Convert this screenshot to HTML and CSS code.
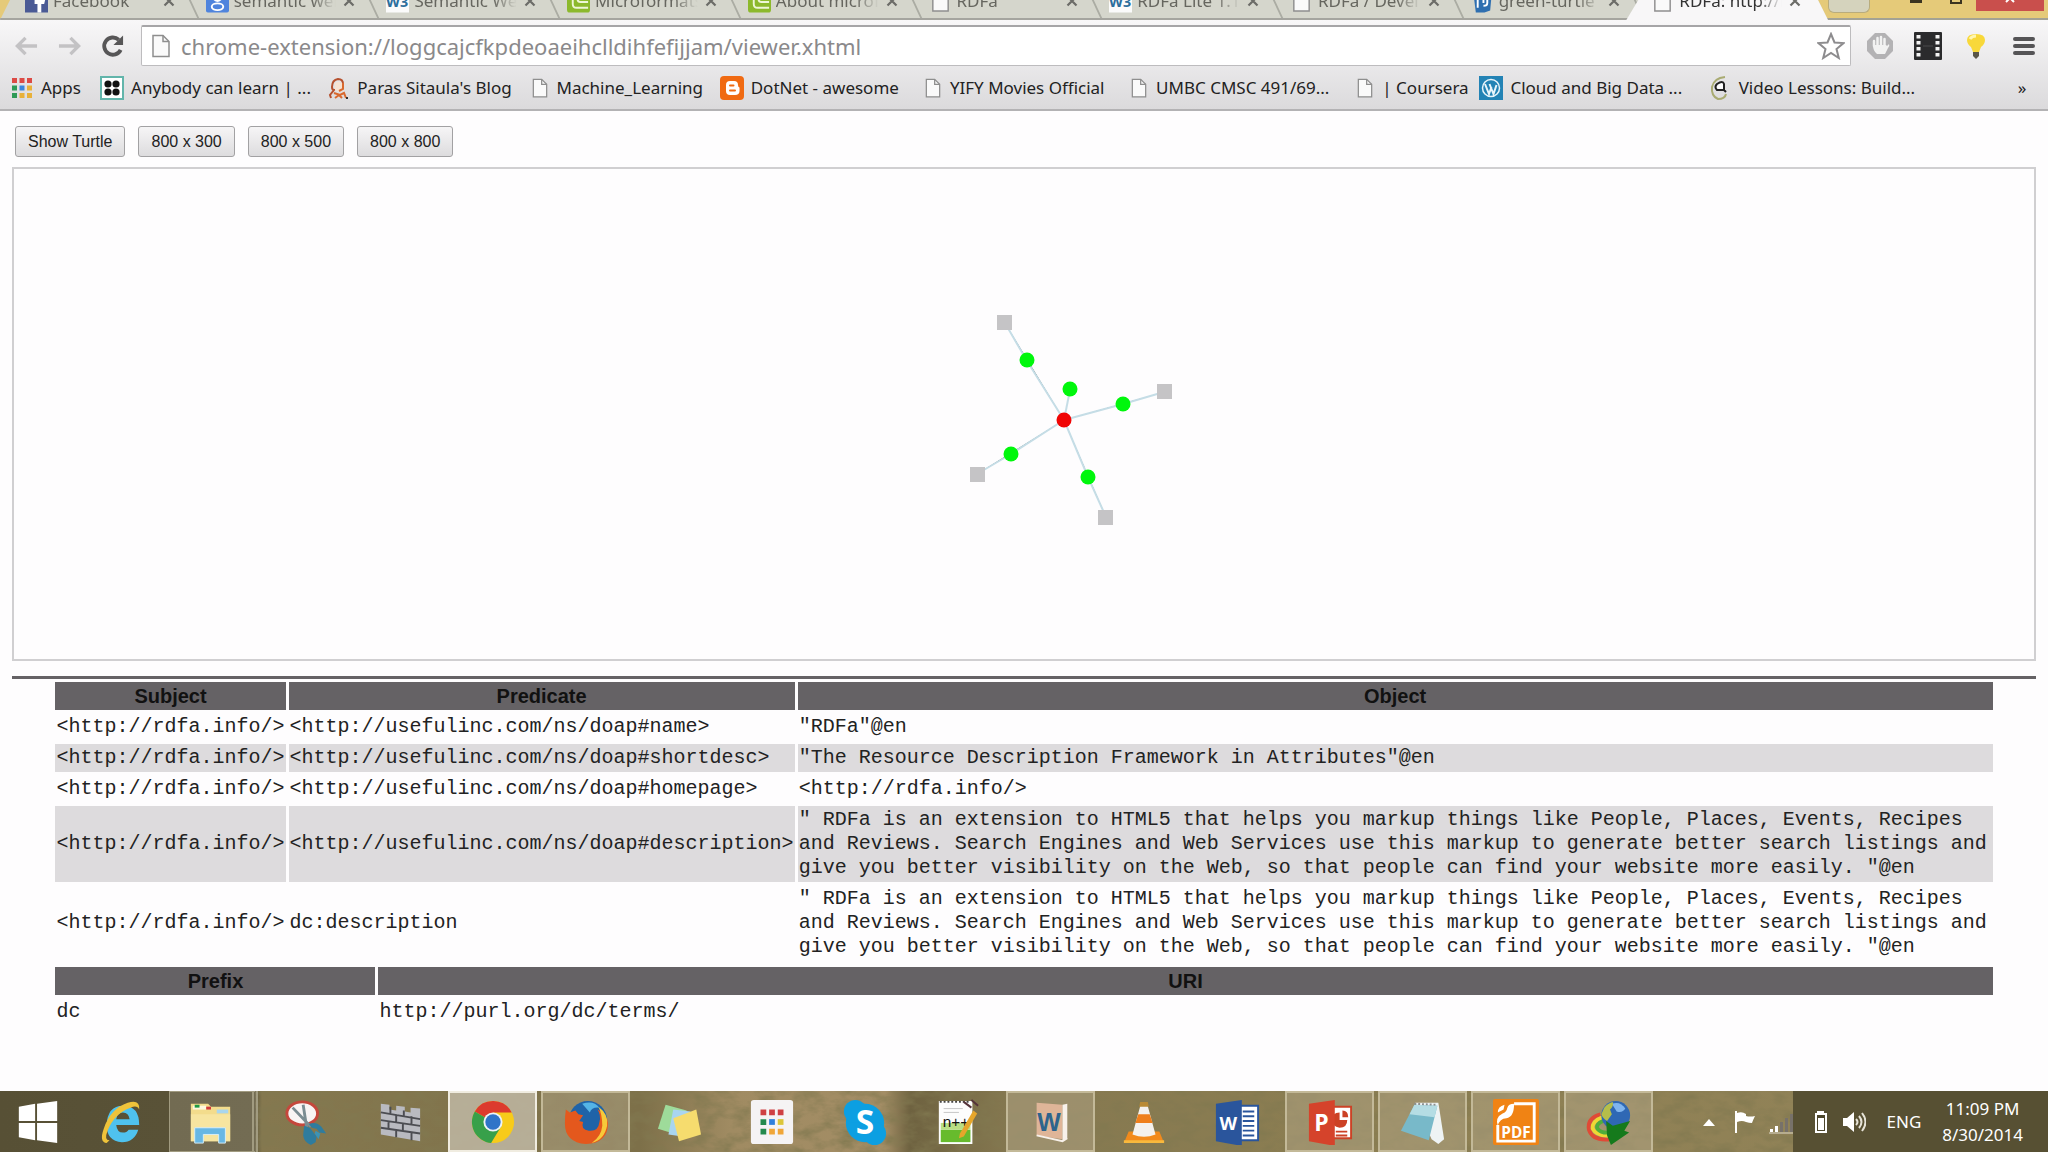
FILE: index.html
```html
<!DOCTYPE html>
<html lang="en">
  <head>
    <meta charset="UTF-8" />
    <meta name="viewport" content="width=device-width, initial-scale=1.0" />
    <title>RDFa: http://rdfa.info/</title>
    <link rel="stylesheet" href="styles.css">
  </head>
  <body>
    <!-- shared icons -->
    <svg class="defs" xmlns="http://www.w3.org/2000/svg">
      <symbol id="page" viewBox="0 0 24 24">
        <path d="M4 1.500h10l6 6v15H4z" fill="#fafafa" stroke="#8e8e8e" stroke-width="1.500"></path>
        <path d="M14 1.500v6h6" fill="none" stroke="#8e8e8e" stroke-width="1.500"></path>
      </symbol>
      <symbol id="w3" viewBox="0 0 24 24">
        <rect width="24" height="24" fill="#fbfbfb"></rect>
        <text x="0" y="18" font-family="Open Sans, sans-serif" font-weight="700" font-size="15" fill="#2c6e9c">W3</text>
      </symbol>
      <symbol id="leaf" viewBox="0 0 24 24">
        <rect width="24" height="24" rx="3" fill="#8cb92c"></rect>
        <path d="M6 0v15q0 4 4 4h12M11 0v10q0 3 3 3h8" fill="none" stroke="#eef6d6" stroke-width="2"></path>
      </symbol>
      <symbol id="close" viewBox="0 0 12 12">
        <path d="M1.500 1.500l9 9M10.500 1.500l-9 9" stroke="#6c6c68" stroke-width="2.200"></path>
      </symbol>
      <filter id="grass" x="0" y="0" width="100%" height="100%">
        <feTurbulence type="fractalNoise" baseFrequency="0.05 0.09" numOctaves="4" seed="7"></feTurbulence>
        <feColorMatrix values="0 0 0 0 0.22  0 0 0 0 0.19  0 0 0 0 0.08  1.800 0 0 0 -0.700"></feColorMatrix>
      </filter>
    </svg>

    <header class="browser">
      <div class="strip">
        <nav class="tabs">
          <a class="tab" href="#">
            <svg class="tab_icon" viewBox="0 0 24 24"><rect width="24" height="24" fill="#4a5a95"></rect><path d="M13 24v-9h-3v-4h3V8q0-5 5-5h3v4h-2q-2 0-2 2v2h4l-1 4h-3v9z" fill="#fff"></path></svg>
            <span class="tab_title">Facebook</span><svg class="tab_close"><use href="#close"></use></svg>
          </a>
          <a class="tab" href="#">
            <svg class="tab_icon" viewBox="0 0 24 24"><rect width="24" height="24" rx="2" fill="#4f84dd"></rect><circle cx="12" cy="8" r="4" fill="none" stroke="#fff" stroke-width="2"></circle><ellipse cx="12" cy="18" rx="6" ry="3.500" fill="none" stroke="#fff" stroke-width="2"></ellipse></svg>
            <span class="tab_title">semantic web</span><svg class="tab_close"><use href="#close"></use></svg>
          </a>
          <a class="tab" href="#">
            <svg class="tab_icon"><use href="#w3"></use></svg>
            <span class="tab_title">Semantic Web</span><svg class="tab_close"><use href="#close"></use></svg>
          </a>
          <a class="tab" href="#">
            <svg class="tab_icon"><use href="#leaf"></use></svg>
            <span class="tab_title">Microformats</span><svg class="tab_close"><use href="#close"></use></svg>
          </a>
          <a class="tab" href="#">
            <svg class="tab_icon"><use href="#leaf"></use></svg>
            <span class="tab_title">About microf</span><svg class="tab_close"><use href="#close"></use></svg>
          </a>
          <a class="tab" href="#">
            <svg class="tab_icon"><use href="#page"></use></svg>
            <span class="tab_title">RDFa</span><svg class="tab_close"><use href="#close"></use></svg>
          </a>
          <a class="tab" href="#">
            <svg class="tab_icon"><use href="#w3"></use></svg>
            <span class="tab_title">RDFa Lite 1.1</span><svg class="tab_close"><use href="#close"></use></svg>
          </a>
          <a class="tab" href="#">
            <svg class="tab_icon"><use href="#page"></use></svg>
            <span class="tab_title">RDFa / Devel</span><svg class="tab_close"><use href="#close"></use></svg>
          </a>
          <a class="tab" href="#">
            <svg class="tab_icon" viewBox="0 0 24 24"><path d="M2 0h20l-2 22-6 2H5z" fill="#2f6fb0"></path><path d="M7 6v13M7 8h4q2 0 2 3v3M17 6v8q0 3-4 3" fill="none" stroke="#fff" stroke-width="2"></path></svg>
            <span class="tab_title">green-turtle</span><svg class="tab_close"><use href="#close"></use></svg>
          </a>
          <a class="tab tab_active" href="#">
            <svg class="tab_icon"><use href="#page"></use></svg>
            <span class="tab_title">RDFa: http://r</span><svg class="tab_close"><use href="#close"></use></svg>
          </a>
        </nav>
        <button class="new_tab" aria-label="New tab"></button>
        <div class="window_buttons">
          <button class="win_btn" aria-label="Minimize"><svg width="14" height="4"><rect width="12" height="3" x="1" fill="#3b3420"></rect></svg></button>
          <button class="win_btn" aria-label="Maximize"><svg width="14" height="4"><path d="M2 0v3h10V0" fill="none" stroke="#3b3420" stroke-width="2"></path></svg></button>
          <button class="win_btn win_close" aria-label="Close"><svg width="14" height="4"><path d="M3 2l3-3M11 2l-3-3" stroke="#fff" stroke-width="2"></path></svg></button>
        </div>
      </div>

      <div class="toolbar">
        <button class="tool" aria-label="Back"><svg viewBox="0 0 24 24"><path d="M23 12H4M11 3.500L2.500 12l8.500 8.500" fill="none" stroke="#c3c2c4" stroke-width="3.500"></path></svg></button>
        <button class="tool" aria-label="Forward"><svg viewBox="0 0 24 24"><path d="M1 12h19M13 3.500l8.500 8.500-8.500 8.500" fill="none" stroke="#c3c2c4" stroke-width="3.500"></path></svg></button>
        <button class="tool" aria-label="Reload"><svg viewBox="0 0 24 24"><path d="M18.500 5.500A9 9 0 1 0 20.500 16" fill="none" stroke="#575657" stroke-width="4"></path><path d="M23 1v10H13z" fill="#575657"></path></svg></button>
        <div class="omnibox">
          <svg class="omni_icon"><use href="#page"></use></svg>
          <input class="url" type="text" aria-label="Address" value="chrome-extension://loggcajcfkpdeoaeihclldihfefijjam/viewer.xhtml">
          <button class="star" aria-label="Bookmark this page"><svg viewBox="0 0 28 28"><path d="M14 2l3.500 8.500 9 .6-7 5.900 2.300 9L14 21l-7.800 5 2.300-9-7-5.900 9-.6z" fill="#fff" stroke="#8d8c8e" stroke-width="2"></path></svg></button>
        </div>
        <div class="extensions">
          <button class="ext" aria-label="Ad blocker"><svg viewBox="0 0 28 28"><path d="M9 1h10l8 8v10l-8 8H9l-8-8V9z" fill="#b3b2b4"></path><path d="M8 14V9M11.500 13V6M15 13V5M18.500 14V7" stroke="#f2f2f2" stroke-width="2.500" stroke-linecap="round"></path><path d="M7 13h13l1 1 2-2q1 2-1 4l-3 6h-8q-4-3-4-9z" fill="#f2f2f2"></path></svg></button>
          <button class="ext" aria-label="Film"><svg viewBox="0 0 28 28"><rect width="28" height="28" rx="1" fill="#2b2b2d"></rect><path d="M4.500 3v23M23.500 3v23" stroke="#f4f4f4" stroke-width="4" stroke-dasharray="3.500 2.500"></path><path d="M9 14h10" stroke="#4a4a4c"></path></svg></button>
          <button class="ext" aria-label="Light bulb"><svg viewBox="0 0 28 28"><path d="M5 8q0-6 9-6t9 6q0 4-4 7l-2 5h-6l-2-5Q5 12 5 8z" fill="#f8d83a"></path><path d="M8 7q2-3 6-3" stroke="#fff6b0" stroke-width="3" fill="none"></path><path d="M11 20h6v4l-3 3-3-3z" fill="#5a5648"></path></svg></button>
          <button class="ext" aria-label="Menu"><svg viewBox="0 0 28 28"><path d="M5 7h18M5 14h18M5 21h18" stroke="#555456" stroke-width="4" stroke-linecap="round"></path></svg></button>
        </div>
      </div>

      <nav class="bookmarks">
        <a href="#"><svg class="bm_icon" viewBox="0 0 24 24"><path d="M2 2h5v5H2zM9.500 2h5v5h-5zM17 2h5v5h-5z" fill="#dc4b45"></path><path d="M2 9.500h5v5H2zM2 17h5v5H2z" fill="#2e9a57"></path><path d="M9.500 9.500h5v5h-5z" fill="#3a86dd"></path><path d="M17 9.500h5v5h-5zM9.500 17h5v5h-5zM17 17h5v5h-5z" fill="#e8b13a"></path></svg>Apps</a>
        <a href="#"><svg class="bm_icon" viewBox="0 0 24 24"><rect x="1" y="1" width="22" height="22" fill="#fff" stroke="#62b5ab" stroke-width="2"></rect><g fill="#111"><circle cx="8" cy="8" r="3.600"></circle><circle cx="16" cy="8" r="3.600"></circle><circle cx="8" cy="16" r="3.600"></circle><circle cx="16" cy="16" r="3.600"></circle></g></svg>Anybody can learn | ...</a>
        <a href="#"><svg class="bm_icon" viewBox="0 0 24 24"><path d="M17 8q0-5-5-5Q6 4 6 11q0 3 2 3l-4 5 1 3" fill="none" stroke="#b5502e" stroke-width="2"></path><path d="M9 7q6-3 8 2l1 5-4 2-5-2z" fill="#f7e2d2"></path><path d="M17 7v6l-4 2M8 17l6 2 4-2 2 5M9 22l4-3 3 3" fill="none" stroke="#d9692f" stroke-width="2"></path><path d="M20 22h2" stroke="#333" stroke-width="2"></path></svg>Paras Sitaula's Blog</a>
        <a href="#"><svg class="bm_icon bm_page"><use href="#page"></use></svg>Machine_Learning</a>
        <a href="#"><svg class="bm_icon" viewBox="0 0 24 24"><rect width="24" height="24" rx="4" fill="#f06a12"></rect><path d="M6 9q0-4 4-4h4q4 0 4 4 0 2 1.500 2.500V15q0 4-4.500 4h-5q-4 0-4-4z" fill="#fff"></path><path d="M10 9.500h3.500M10 14.500h5" stroke="#f06a12" stroke-width="2" stroke-linecap="round"></path></svg>DotNet - awesome</a>
        <a href="#"><svg class="bm_icon bm_page"><use href="#page"></use></svg>YIFY Movies Official</a>
        <a href="#"><svg class="bm_icon bm_page"><use href="#page"></use></svg>UMBC CMSC 491/69...</a>
        <a href="#"><svg class="bm_icon bm_page"><use href="#page"></use></svg>| Coursera</a>
        <a href="#"><svg class="bm_icon" viewBox="0 0 24 24"><rect width="24" height="24" fill="#2383b5"></rect><circle cx="12" cy="12" r="8.500" fill="none" stroke="#e8f4fa" stroke-width="1.500"></circle><path d="M6 8l4 10 2.500-7M10.500 8l4 10 3-9" fill="none" stroke="#e8f4fa" stroke-width="2"></path></svg>Cloud and Big Data ...</a>
        <a href="#"><svg class="bm_icon" viewBox="0 0 24 24"><path d="M17 1Q6 2 4 11q-1 9 6 12 7 0 8-5" fill="none" stroke="#a9ab72" stroke-width="2"></path><path d="M9 8q6-4 7 0v6H9q-3-3 0-6zM16 14l2 2" fill="#fff" stroke="#222" stroke-width="2"></path></svg>Video Lessons: Build...</a>
        <button class="more" aria-label="More bookmarks">»</button>
      </nav>
    </header>

    <main class="viewer">
      <div class="controls">
        <button class="btn">Show Turtle</button>
        <button class="btn">800 x 300</button>
        <button class="btn">800 x 500</button>
        <button class="btn">800 x 800</button>
      </div>

      <!-- red: subject, green: predicates, grey: literal objects -->
      <svg class="graph" viewBox="0 -1 2020 490">
        <g stroke="#c5dde6" stroke-width="2">
          <path d="M1050 250L1013 191L991 153"></path>
          <path d="M1050 250L1056 220"></path>
          <path d="M1050 250L1109 234L1150 222"></path>
          <path d="M1050 250L997 284L963 304"></path>
          <path d="M1050 250L1074 307L1092 347"></path>
        </g>
        <g fill="#c5c4c6">
          <rect x="983" y="145" width="15" height="15"></rect>
          <rect x="1143" y="214" width="15" height="15"></rect>
          <rect x="956" y="297" width="15" height="15"></rect>
          <rect x="1084" y="340" width="15" height="15"></rect>
        </g>
        <g fill="#00f70c">
          <circle cx="1013" cy="190" r="7.500"></circle>
          <circle cx="1056" cy="219" r="7.500"></circle>
          <circle cx="1109" cy="234" r="7.500"></circle>
          <circle cx="997" cy="284" r="7.500"></circle>
          <circle cx="1074" cy="307" r="7.500"></circle>
        </g>
        <circle cx="1050" cy="250" r="7.500" fill="#f00505"></circle>
      </svg>

      <hr class="rule">

      <table class="triples">
        <thead>
          <tr><th>Subject</th><th>Predicate</th><th>Object</th></tr>
        </thead>
        <tbody>
          <tr>
            <td class="term">&lt;http://rdfa.info/&gt;</td>
            <td class="term">&lt;http://usefulinc.com/ns/doap#name&gt;</td>
            <td>"RDFa"@en</td>
          </tr>
          <tr>
            <td class="term">&lt;http://rdfa.info/&gt;</td>
            <td class="term">&lt;http://usefulinc.com/ns/doap#shortdesc&gt;</td>
            <td>"The Resource Description Framework in Attributes"@en</td>
          </tr>
          <tr>
            <td class="term">&lt;http://rdfa.info/&gt;</td>
            <td class="term">&lt;http://usefulinc.com/ns/doap#homepage&gt;</td>
            <td>&lt;http://rdfa.info/&gt;</td>
          </tr>
          <tr>
            <td class="term">&lt;http://rdfa.info/&gt;</td>
            <td class="term">&lt;http://usefulinc.com/ns/doap#description&gt;</td>
            <td>" RDFa is an extension to HTML5 that helps you markup things like People, Places, Events, Recipes and Reviews. Search Engines and Web Services use this markup to generate better search listings and give you better visibility on the Web, so that people can find your website more easily. "@en</td>
          </tr>
          <tr>
            <td class="term">&lt;http://rdfa.info/&gt;</td>
            <td class="term">dc:description</td>
            <td>" RDFa is an extension to HTML5 that helps you markup things like People, Places, Events, Recipes and Reviews. Search Engines and Web Services use this markup to generate better search listings and give you better visibility on the Web, so that people can find your website more easily. "@en</td>
          </tr>
        </tbody>
      </table>

      <table class="triples">
        <thead>
          <tr><th class="prefix">Prefix</th><th>URI</th></tr>
        </thead>
        <tbody>
          <tr><td>dc</td><td>http://purl.org/dc/terms/</td></tr>
        </tbody>
      </table>
    </main>

    <footer class="taskbar">
      <svg class="texture"><rect width="100%" height="100%" filter="url(#grass)"></rect></svg>
      <button class="start" aria-label="Start"><svg viewBox="0 0 48 48"><path d="M4 8l17-3v18H4zM23 5l21-3v21H23zM4 25h17v18L4 40zM23 25h21v21l-21-3z" fill="#fff"></path></svg></button>
      <div class="apps">
        <button class="app" aria-label="Internet Explorer"><svg viewBox="0 0 48 48"><path d="M43 27H19q1 8 7 8 4 0 6-3h10q-4 13-17 13Q9 44 9 27 10 7 26 7q17 0 17 20zM19 21h14q-1-7-7-7t-7 7z" fill="#4fc2ee"></path><path d="M9 46Q1 45 6 31 13 10 31 4q13-4 12 7-2-5-9-2Q17 15 10 33q-4 10 2 10z" fill="#efc33a"></path></svg></button>
        <button class="app app_open app_stack" aria-label="File Explorer"><svg viewBox="0 0 48 48"><path d="M3 5h18l3 3h20v36H3z" fill="#f3dc8c"></path><path d="M5 7h14v4H5z" fill="#fff8dc"></path><path d="M7 6h5v3H7z" fill="#1f9a45"></path><path d="M19 8h5v3h-5z" fill="#d23b3b"></path><path d="M30 11h12v4H30z" fill="#a9d6ee"></path><path d="M3 16h41v28H3z" fill="#f7e5a0"></path><path d="M7 46V30h32v16h-7v-9H16v9z" fill="#67b7e4" stroke="#d8eef8"></path></svg></button>
        <button class="app" aria-label="Snipping Tool"><svg viewBox="0 0 48 48"><ellipse cx="19" cy="15" rx="16" ry="12" fill="#f8f4f4" stroke="#c5473c" stroke-width="3"></ellipse><path d="M9 9l19 20M20 6l4 26" stroke="#7b8c92" stroke-width="3"></path><path d="M26 26q8-3 13 3l5 7-7-1-3-4-5-1z" fill="#2f7c9e"></path><path d="M21 28l6 2 7 9-1 6-5 3q-7-3-8-10z" fill="#2f7c9e"></path><path d="M33 33l5 3-2 6-4-6z" fill="#3d93b5"></path></svg></button>
        <button class="app" aria-label="Firewall"><svg viewBox="0 0 48 48"><path d="M4 5l9 1v5l7 1V7l9 1v5l6 1V9l10 1v34L4 37z" fill="#b9bac0"></path><path d="M4 14l41 7M4 22l41 6M4 30l41 6M14 8v7M28 12v6M20 16v8M36 18v9M12 23v8M27 25v8M20 32v8M36 35v8" stroke="#4c4d52" stroke-width="2"></path></svg></button>
        <button class="app app_open app_focus" aria-label="Chrome"><svg viewBox="0 0 48 48"><circle cx="24" cy="24" r="22" fill="#f7cb1a"></circle><path d="M24 24L5 13A22 22 0 0 1 43.500 14H24z" fill="#dc3a2e"></path><path d="M24 24L5 13a22 22 0 0 0 17 33l11-18z" fill="#37a04a"></path><circle cx="24" cy="24" r="10" fill="#eef3f8"></circle><circle cx="24" cy="24" r="8" fill="#2f74c8"></circle></svg></button>
        <button class="app app_open" aria-label="Firefox"><svg viewBox="0 0 48 48"><circle cx="26" cy="22" r="20" fill="#1f63a8"></circle><path d="M20 5q12-4 18 4-8-1-10 5z" fill="#54b4e6"></path><path d="M3 11l4 3 6-2 3 4 5 1-4 6 4 1q-3 8 6 9 10 1 11-9 2-7-2-13 10 5 11 14 0 21-23 22Q2 45 2 26q0-9 1-15z" fill="#e4581d"></path><path d="M37 8q11 8 9 20-3 15-16 18 10-7 11-18 0-12-4-20z" fill="#f7c93a"></path></svg></button>
        <button class="app" aria-label="Sticky Notes"><svg viewBox="0 0 48 48"><path d="M10 6l22 6-7 26-23-7z" fill="#9edb9a"></path><path d="M18 11l18 2-3 27-20-3z" fill="#a9d5f0"></path><path d="M18 20l24-9 5 26-23 7z" fill="#f6dc6e"></path></svg></button>
        <button class="app" aria-label="App Launcher"><svg viewBox="0 0 48 48"><rect x="2" y="1" width="44" height="46" rx="3" fill="#f5f3f4"></rect><path d="M12 11h6v6h-6zM21 11h6v6h-6zM30 11h6v6h-6z" fill="#cf4043"></path><path d="M12 21h6v6h-6zM12 31h6v6h-6z" fill="#23894d"></path><path d="M21 21h6v6h-6z" fill="#2f7fdc"></path><path d="M30 21h6v6h-6z" fill="#dcc63a"></path><path d="M21 31h6v6h-6zM30 31h6v6h-6z" fill="#f0a638"></path></svg></button>
        <button class="app" aria-label="Skype"><svg viewBox="0 0 48 48"><circle cx="24" cy="25" r="20" fill="#0c9fe2"></circle><circle cx="14" cy="13" r="12" fill="#0c9fe2"></circle><circle cx="34" cy="36" r="12" fill="#0c9fe2"></circle><text x="24" y="37" text-anchor="middle" font-family="Open Sans, sans-serif" font-weight="700" font-size="35" fill="#fff">S</text></svg></button>
        <button class="app" aria-label="Notepad++"><svg viewBox="0 0 48 48"><path d="M4 2h35v45H4z" fill="#fdfdfd"></path><path d="M6 32h31v13H6z" fill="#67bb2d"></path><path d="M6 25h31v7H6z" fill="#b9de84"></path><path d="M5 3h32" stroke="#444" stroke-width="2" stroke-dasharray="2 2"></path><path d="M9 10h20M9 14h16" stroke="#c3c3c3"></path><text x="8" y="29" font-family="Liberation Sans, sans-serif" font-size="16" fill="#111">n++</text><path d="M40 12l4 3-14 24-5 2 1-5z" fill="#e6a62b"></path><path d="M30 3l8 6M38 1l7 6" stroke="#55333a" stroke-width="2"></path></svg></button>
        <button class="app app_open" aria-label="Dictionary"><svg viewBox="0 0 48 48"><path d="M9 4l27 2v36L9 38z" fill="#dfb598"></path><path d="M36 6l5-1v36l-5 3z" fill="#f8f1ea"></path><path d="M9 38l27 6 5-3" fill="none" stroke="#f8f1ea" stroke-width="2"></path><text x="22" y="33" text-anchor="middle" font-family="Liberation Sans, sans-serif" font-weight="700" font-size="26" fill="#2e648c">W</text></svg></button>
        <button class="app" aria-label="VLC"><svg viewBox="0 0 48 48"><path d="M8 34h32l5 12H3z" fill="#f28a1c"></path><path d="M3 43h42v3H3z" fill="#f9b93d"></path><path d="M21 4h6l9 33q-12 5-24 0z" fill="#f4f1ee"></path><path d="M20 3h8l1 5H19z" fill="#b98a35"></path><path d="M18 16h12l3 9H15z" fill="#ef7f1c"></path></svg></button>
        <button class="app" aria-label="Word"><svg viewBox="0 0 48 48"><path d="M24 7h22v36H24z" fill="#fff" stroke="#2a559c" stroke-width="2"></path><path d="M30 13h12M30 18h12M30 23h12M30 28h12M30 33h12M30 38h12" stroke="#2a559c" stroke-width="2"></path><path d="M2 5l27-4v48L2 44z" fill="#2a559c"></path><text x="15" y="32" text-anchor="middle" font-family="Open Sans, sans-serif" font-weight="700" font-size="19" fill="#fff">W</text></svg></button>
        <button class="app app_open" aria-label="PowerPoint"><svg viewBox="0 0 48 48"><path d="M24 8h22v33H24z" fill="#fff" stroke="#cc4125" stroke-width="2"></path><path d="M34 14v8h8q0 8-8 8-8-1-8-8 0-8 8-8z" fill="#cc4125"></path><path d="M37 12q6 0 6 7h-6z" fill="#cc4125"></path><path d="M30 34h12M30 38h12" stroke="#cc4125" stroke-width="2"></path><path d="M2 5l27-4v48L2 44z" fill="#d5432b"></path><text x="15" y="33" text-anchor="middle" font-family="Open Sans, sans-serif" font-weight="700" font-size="24" fill="#fff">P</text></svg></button>
        <button class="app app_open" aria-label="Notepad"><svg viewBox="0 0 48 48"><path d="M16 4h24l6 38-6 5-7-5z" fill="#eef3f4"></path><path d="M15 6l24 1-9 36L1 33z" fill="#78b9c9"></path><path d="M15 6l24 1-3 12-26-3z" fill="#b5dde4"></path><path d="M15 5l24 1" stroke="#8b8f90" stroke-width="2" stroke-dasharray="2 2"></path></svg></button>
        <button class="app app_open" aria-label="PDF Reader"><svg viewBox="0 0 48 48"><rect width="48" height="48" rx="2" fill="#f08314"></rect><path d="M22 5h21v39H5V27" fill="none" stroke="#fff" stroke-width="3"></path><path d="M22 5q0 14-8 15-7 0-9 8-3-9 5-13 4-1 5-6 1-4 7-4z" fill="#fff"></path><path d="M5 14q0-6 7-8l-1 5z" fill="#fff"></path><text x="24" y="41" text-anchor="middle" font-family="Open Sans, sans-serif" font-weight="700" font-size="16" fill="#fff">PDF</text></svg></button>
        <button class="app app_open" aria-label="Download Manager"><svg viewBox="0 0 48 48"><path d="M15 16Q1 20 3 32q4 12 22 10" fill="none" stroke="#e04a36" stroke-width="4"></path><path d="M17 19Q6 23 7 31q4 8 18 7" fill="none" stroke="#efd834" stroke-width="4"></path><path d="M18 23q-8 3-6 8 4 5 13 4" fill="none" stroke="#4fae3b" stroke-width="4"></path><circle cx="31" cy="17" r="15" fill="#2f68b4"></circle><path d="M27 5q9-3 14 5-3 5-9 3z" fill="#7fb4ee"></path><path d="M19 9q4-5 9-6 1 5-3 8l2 5-5 7q-5-3-6-7z" fill="#b5be4a"></path><path d="M21 23l7 5 18-5-6 10 5 2-19 13-4-10z" fill="#157a1c"></path></svg></button>
      </div>
      <div class="tray">
        <button class="tray_btn" aria-label="Show hidden icons"><svg viewBox="0 0 24 24"><path d="M6 16l6-7 6 7z" fill="#fff"></path></svg></button>
        <button class="tray_btn" aria-label="Action Center"><svg viewBox="0 0 24 24"><path d="M2 1h2v22H2zM4 3q5-2 9 1v8q-4-2-9 0zM13 6q4 1 9 0-2 4-3 7-3 0-6-1z" fill="#fff"></path></svg></button>
        <button class="tray_btn" aria-label="Network"><svg viewBox="0 0 24 24"><path d="M1 19h3v3H1zM6 16h3v6H6z" fill="#fff"></path><path d="M11 12h3v10h-3zM16 8h3v14h-3zM21 4h3v18h-3z" fill="#77716a"></path><path d="M0 23h24" stroke="#ddd8c8"></path></svg></button>
      </div>
      <div class="tray tray_dark">
        <button class="tray_btn" aria-label="Battery"><svg viewBox="0 0 24 24"><path d="M8 1h7v3H8zM6 3h12v20H6z" fill="#fff"></path><path d="M8 5h8v16H8z" fill="#4c462c"></path><path d="M9 8h6v12H9z" fill="#fff"></path></svg></button>
        <button class="tray_btn" aria-label="Volume"><svg viewBox="0 0 24 24"><path d="M1 8h4l7-6v20l-7-6H1z" fill="#fff"></path><path d="M14 9q3 3 0 6M17 6q5 6 0 12M20 3q7 9 0 18" fill="none" stroke="#e6e3d8" stroke-width="2"></path></svg></button>
        <button class="lang">ENG</button>
        <time class="clock"><span>11:09 PM</span><span>8/30/2014</span></time>
      </div>
    </footer>
  </body>
</html>
```
FILE: styles.css
```css
*,
*:before,
*:after {
  box-sizing: border-box;
}
body {
  margin: 0;
  min-height: 100vh;
  display: flex;
  flex-direction: column;
  background: #fefdfe;
  color: #222;
  font: 17px/24px "Noto Sans", "Open Sans", sans-serif;
}
a {
  color: inherit;
  text-decoration: none;
}
button {
  margin: 0;
  padding: 0;
  border: 0;
  background: none;
  color: inherit;
  font: inherit;
}
svg {
  display: block;
  flex: none;
}
.defs {
  position: absolute;
  width: 0;
  height: 0;
}

/* tab strip, only its lower edge is on screen */
.strip {
  display: flex;
  height: 20px;
  overflow: hidden;
  background: #e5ca79;
  box-shadow: inset 0 -2px #a3a294;
}
.tabs {
  flex: 0 1 1828px;
  display: flex;
  min-width: 0;
  padding: 0 8px 0 13px;
  background: #d5d6cc;
  box-shadow: inset 0 -2px #a5a59f;
  clip-path: polygon(10px 0, calc(100% - 10px) 0, 100% 100%, 0 100%);
}
.tab {
  position: relative;
  flex: 1;
  min-width: 0;
  display: flex;
  align-items: flex-end;
  gap: 5px;
  height: 13px;
  padding: 0 19px 0 12px;
  color: #66665f;
}
.tab:after {
  content: "";
  position: absolute;
  right: -1px;
  top: 0;
  width: 2px;
  height: 18px;
  background: #abaca3;
  transform: skewX(25deg);
}
.tab_icon {
  width: 23px;
  height: 24px;
}
.tab_title {
  flex: 1;
  overflow: hidden;
  white-space: nowrap;
  -webkit-mask-image: linear-gradient(90deg, #000 75%, transparent 98%);
  mask-image: linear-gradient(90deg, #000 75%, transparent 98%);
}
.tab_close {
  width: 12px;
  height: 12px;
  margin-bottom: 6px;
}
.tab_active {
  color: #333;
}
.tab_active > * {
  z-index: 1;
}
.tab_active:after {
  display: none;
}
.tab_active:before {
  content: "";
  position: absolute;
  left: -13px;
  right: -8px;
  top: 0;
  height: 20px;
  background: #f8f7f8;
  clip-path: polygon(12px 0, 100% 0, 100% 100%, 0 100%);
}
.new_tab {
  width: 42px;
  height: 13px;
  background: #d5d3bd;
  border: 1px solid #b9ac7c;
  border-top: 0;
  border-radius: 0 0 6px 6px;
}
.window_buttons {
  display: flex;
  margin-left: auto;
  padding-right: 4px;
}
.win_btn {
  display: flex;
  justify-content: center;
  width: 40px;
  height: 11px;
}
.win_close {
  width: 68px;
  background: #c94f4c;
}

.browser {
  background: linear-gradient(#f8f7f8 20px, #dbdadc);
  border-bottom: 2px solid #b3b2b4;
}
.toolbar {
  display: flex;
  align-items: center;
  gap: 20px;
  padding: 5px 10px 0 15px;
}
.tool svg {
  width: 23px;
  height: 24px;
}
.omnibox {
  flex: 1;
  display: flex;
  align-items: center;
  gap: 8px;
  height: 41px;
  padding: 0 5px 0 7px;
  background: #fff;
  border: 1px solid #bdbcbe;
  border-top: 2px solid #a6a5a7;
  border-radius: 2px;
}
.tool + .omnibox {
  margin-left: -3px;
}
.omni_icon {
  width: 24px;
  height: 24px;
}
.url {
  flex: 1;
  min-width: 0;
  padding: 0;
  border: 0;
  outline: 0;
  background: none;
  color: #8a898b;
  font: 22px/30px "Noto Sans", "Open Sans", sans-serif;
}
.star svg,
.ext svg {
  width: 28px;
  height: 28px;
}
.extensions {
  display: flex;
  gap: 20px;
  margin-left: -5px;
}
.bookmarks {
  display: grid;
  grid-template-columns: 90fr 226fr 203fr 190fr 203fr 206fr 226fr 124fr 228fr 304fr 20fr;
  align-items: center;
  height: 43px;
  padding: 0 16px 0 10px;
  white-space: nowrap;
}
.bookmarks a {
  display: flex;
  align-items: center;
  gap: 7px;
  min-width: 0;
}
.bm_icon {
  width: 24px;
  height: 24px;
}
.bm_page {
  width: 20px;
}

/* viewer page */
.viewer {
  flex: 1;
  padding: 15px 12px 40px;
}
.controls {
  display: flex;
  gap: 13px;
  padding: 0 3px;
  margin-bottom: 10px;
}
.btn {
  height: 31px;
  padding: 0 12px;
  border: 1px solid #a2a1a3;
  border-radius: 3px;
  background: linear-gradient(#f6f5f6, #dddcde);
  font: 16px/24px "Liberation Sans", Arial, sans-serif;
}
.graph {
  width: 100%;
  border: 2px solid #d0cfd1;
}
.rule {
  height: 3px;
  margin: 15px 0 0;
  border: 0;
  background: #656265;
}
.triples {
  width: 96%;
  margin: 0 auto;
  border-spacing: 3px;
  font: 20px/24px "Liberation Mono", "Courier New", monospace;
}
.triples th {
  padding: 2px 1px;
  background: #656265;
  color: #111;
  font: bold 20px/24px "Liberation Sans", Arial, sans-serif;
}
.triples td {
  padding: 2px 1px;
}
.triples .term {
  white-space: nowrap;
}
.triples .prefix {
  width: 320px;
}
.triples tbody tr:nth-child(even) td {
  background: #dddbdd;
}

/* taskbar */
.taskbar {
  position: relative;
  display: flex;
  height: 61px;
  overflow: hidden;
  background: linear-gradient(90deg, #575035 0, #5a5338 255px, #85784f 262px, #7d7049 640px, #a08b62 730px, #a38d65 885px, #6e6240 910px, #857850 1010px, #8d7f52 1400px, #93845a 100%);
  color: #fff;
}
.taskbar > * {
  position: relative;
}
.taskbar .texture {
  position: absolute;
  left: 255px;
  top: 0;
  width: 100%;
  height: 100%;
}
.start {
  display: flex;
  align-items: center;
  justify-content: center;
  width: 76px;
}
.start svg,
.app svg {
  width: 46px;
  height: 46px;
}
.apps {
  display: flex;
  gap: 4px;
}
.app {
  display: flex;
  align-items: center;
  justify-content: center;
  width: 89px;
  height: 61px;
}
.app_open {
  border: 2px solid #c3b998;
  background: rgba(190, 178, 150, 0.4);
}
.app_focus {
  border-color: #f0ece0;
  background: rgba(205, 198, 182, 0.7);
}
.app_stack {
  border: 1px solid #a19b80;
  border-right: 6px double #a19b80;
  background: rgba(190, 185, 165, 0.25);
}
.tray {
  display: flex;
  align-items: center;
  gap: 12px;
  margin-left: auto;
}
.tray_btn svg {
  width: 24px;
  height: 24px;
}
.tray_dark {
  gap: 9px;
  margin-left: 0;
  padding: 0 25px 0 16px;
  background: #575033;
}
.lang {
  padding: 0 12px;
}
.clock {
  display: flex;
  flex-direction: column;
  align-items: center;
  line-height: 26px;
}
```
